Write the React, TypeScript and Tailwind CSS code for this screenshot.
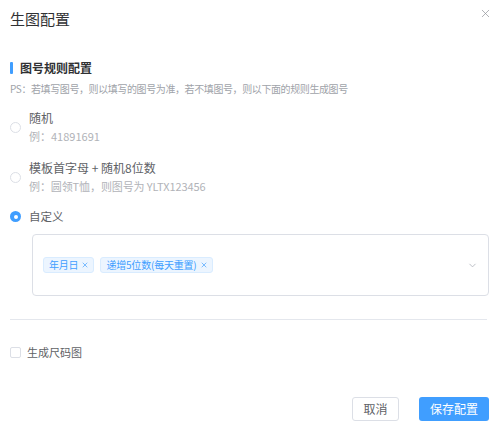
import { X, ChevronDown } from "lucide-react";

function Radio({ checked }: { checked?: boolean }) {
  return checked ? (
    <span className="w-[11px] h-[11px] rounded-full bg-[#409eff] flex items-center justify-center shrink-0">
      <span className="w-[4px] h-[4px] rounded-full bg-white" />
    </span>
  ) : (
    <span className="w-[11px] h-[11px] rounded-full border border-[#dcdfe6] bg-white shrink-0" />
  );
}

function Tag({ label }: { label: string }) {
  return (
    <span className="flex items-center gap-[3px] h-[16px] pl-[5px] pr-[4px] bg-[#ecf5ff] border border-[#d9ecff] rounded-[3px] text-[10px] leading-[14px] tracking-[-0.2px] text-[#409eff]">
      {label}
      <X className="w-[8px] h-[8px]" strokeWidth={2} />
    </span>
  );
}

export default function App() {
  return (
    <div className="w-[497px] h-[429px] bg-white font-['Noto_Sans_CJK_SC',sans-serif] text-[#606266]">
      <div className="flex justify-between items-start pl-[10px] pr-[5px] pt-[9px]">
        <span className="text-[15px] leading-[20px] text-[#303133]">生图配置</span>
        <X className="w-[13px] h-[13px] text-[#909399] -mt-[2px]" strokeWidth={1.3} />
      </div>

      <div className="px-[10px]">
        <div className="flex items-center gap-[7px] mt-[29px] h-[20px]">
          <span className="w-[3px] h-[12px] bg-[#409eff] rounded-[1px]" />
          <span className="text-[12px] font-bold text-[#303133] leading-[20px]">图号规则配置</span>
        </div>
        <div className="mt-[1px] text-[10px] leading-[20px] tracking-[-0.4px] text-[#a0a3a9]">
          PS：若填写图号，则以填写的图号为准，若不填图号，则以下面的规则生成图号
        </div>

        <div className="mt-[9px] flex items-center gap-[8px]">
          <Radio />
          <div className="leading-[19px]">
            <div className="text-[12px] text-[#606266]">随机</div>
            <div className="text-[11px] text-[#b1b3b8]">例：41891691</div>
          </div>
        </div>

        <div className="mt-[12px] flex items-center gap-[8px]">
          <Radio />
          <div className="leading-[19px]">
            <div className="text-[12px] text-[#606266]">模板首字母 + 随机8位数</div>
            <div className="text-[11px] text-[#b1b3b8] tracking-[-0.1px]">例：圆领T恤，则图号为 YLTX123456</div>
          </div>
        </div>

        <div className="mt-[11px] flex items-center gap-[8px] leading-[19px]">
          <Radio checked />
          <span className="text-[11.5px] text-[#606266]">自定义</span>
        </div>

        <div className="mt-[8px] ml-[22px] mr-[-2px] h-[62px] border border-[#dcdfe6] rounded-[4px] flex items-center pl-[10px] pr-[10px]">
          <div className="flex gap-[6px] flex-1">
            <Tag label="年月日" />
            <Tag label="递增5位数(每天重置)" />
          </div>
          <ChevronDown className="w-[11px] h-[11px] text-[#b0b4bc]" strokeWidth={1.8} />
        </div>

        <div className="mt-[23px] h-px bg-[#e4e7ed]" />

        <div className="mt-[22px] flex items-center gap-[6px] h-[20px]">
          <span className="w-[11px] h-[11px] border border-[#dcdfe6] rounded-[2px] bg-white" />
          <span className="text-[11px] text-[#606266]">生成尺码图</span>
        </div>
      </div>

      <div className="mt-[35px] flex justify-end gap-[20px] pr-[8px]">
        <button className="w-[47px] h-[24px] border border-[#dcdfe6] rounded-[3px] bg-white text-[12px] text-[#606266]">
          取消
        </button>
        <button className="w-[70px] h-[24px] rounded-[3px] bg-[#409eff] text-[12px] text-white">
          保存配置
        </button>
      </div>
    </div>
  );
}
